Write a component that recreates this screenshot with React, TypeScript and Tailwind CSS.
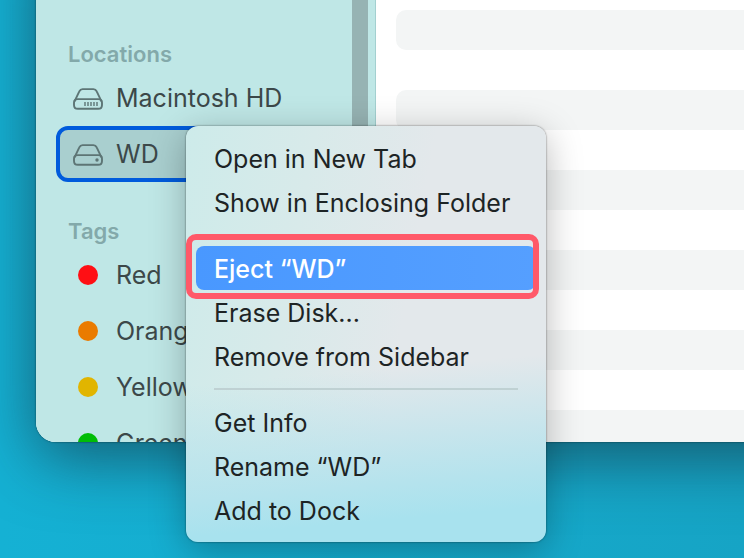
import { ReactNode } from "react";

const tags = [
  { name: "Red", color: "bg-[#ff0f14]" },
  { name: "Orange", color: "bg-[#ea7b00]" },
  { name: "Yellow", color: "bg-[#e1b500]" },
  { name: "Green", color: "bg-[#00bd06]" },
];

function DriveIcon({ internal }: { internal?: boolean }) {
  return (
    <svg width="30" height="24" viewBox="0 -2 30 24" fill="none" stroke="currentColor" strokeWidth="1.9" className="shrink-0 text-[#5d7575]">
      <path d="M1.4 13.6 6.3 3.4C7 1.8 8 1.1 9.6 1.1h10.8c1.6 0 2.6.7 3.3 2.3l4.9 10.2" />
      <path d="M4.6 11.1h20.8c2.3 0 3.6 1.5 3.6 3.6v2.2c0 2.5-1.4 3.9-3.9 3.9H4.9C2.4 20.8 1 19.4 1 16.9v-2.2c0-2.1 1.3-3.6 3.6-3.6Z" />
      {internal ? (
        <path d="M12 14v4M15 14v4M18 14v4M21 14v4M24 14v4" strokeWidth="1.4" />
      ) : (
        <circle cx="24" cy="16" r="1.7" fill="currentColor" stroke="none" />
      )}
    </svg>
  );
}

function SidebarHeading({ children }: { children: ReactNode }) {
  return <h2 className="h-[33px] pl-3 text-[22px] leading-[34px] font-semibold text-[#83a9aa]">{children}</h2>;
}

function SidebarLink({ icon, selected, children }: { icon: ReactNode; selected?: boolean; children: ReactNode }) {
  return (
    <a
      href="#"
      className={
        selected
          ? "flex h-14 items-center gap-3 rounded-xl border-4 border-[#005bdc] bg-[#a9cfcf] pl-3"
          : "flex h-14 items-center gap-3 rounded-xl border-4 border-transparent pl-3"
      }
    >
      <span className="flex w-8 shrink-0 justify-center">{icon}</span>
      <span className="pt-0.5">{children}</span>
    </a>
  );
}

function MenuItem({ children }: { children: ReactNode }) {
  return (
    <button role="menuitem" className="block h-11 w-full rounded-lg px-[18px] pt-0.5 text-left leading-[42px]">
      {children}
    </button>
  );
}

function MenuSeparator() {
  return (
    <div role="separator" className="flex h-[22px] items-center px-[18px]">
      <div className="h-0.5 w-full bg-[#bfd1d3]" />
    </div>
  );
}

export default function App() {
  return (
    <div className="relative flex h-screen flex-col overflow-hidden bg-linear-to-r from-[#15b1d4] to-[#16a4c5] pb-[116px] pl-9 font-[Inter,sans-serif] text-[25px]">
      {/* Finder window, running off the top and right edges of the screen */}
      <div className="-mt-20 -mr-20 min-h-0 flex-1 rounded-bl-[20px] shadow-[0_0_2px_rgba(0,0,0,0.6),0_16px_64px_rgba(20,50,65,0.65)]">
        <div className="flex h-full overflow-hidden rounded-bl-[20px] bg-white pt-20">
          <aside className="-mt-20 flex w-[340px] shrink-0 border-r border-[#a3d0d0] bg-[#bfe7e6] pr-[7px] pl-5">
            <nav className="flex-1 pt-[117px] pr-5 text-[#3c4849]">
              <SidebarHeading>Locations</SidebarHeading>
              <SidebarLink icon={<DriveIcon internal />}>Macintosh HD</SidebarLink>
              <SidebarLink icon={<DriveIcon />} selected>
                WD
              </SidebarLink>
              <div className="pt-8">
                <SidebarHeading>Tags</SidebarHeading>
                {tags.map((tag) => (
                  <SidebarLink key={tag.name} icon={<span className={`size-5 rounded-full ${tag.color}`} />}>
                    {tag.name}
                  </SidebarLink>
                ))}
              </div>
            </nav>
            <div className="w-4 bg-[#96b3b3]" />
          </aside>
          <main className="flex flex-1 flex-col gap-10 pt-2.5 pl-5">
            {[0, 1, 2, 3, 4, 5].map((row) => (
              <div key={row} className="h-10 shrink-0 rounded-l-[10px] bg-[#f3f5f5]" />
            ))}
          </main>
        </div>
      </div>

      {/* Context menu */}
      <div
        role="menu"
        className="absolute top-[126px] left-[186px] w-[360px] rounded-xl bg-[linear-gradient(175deg,transparent_58%,#b5e3ed_84%,#a8e2ee_92%),linear-gradient(100deg,#cdebea,#d8eaea_30%,#e3e8eb_58%)] p-2.5 text-[#1d2425] shadow-[0_0_2px_rgba(0,0,0,0.6),0_8px_36px_rgba(0,0,0,0.28)]"
      >
        <MenuItem>Open in New Tab</MenuItem>
        <MenuItem>Show in Enclosing Folder</MenuItem>
        <MenuSeparator />
        <div className="relative">
          <button
            role="menuitem"
            className="block h-11 w-full rounded-lg bg-linear-to-r from-[#4998ff] to-[#559fff] px-[18px] pt-0.5 text-left leading-[42px] font-medium text-white"
          >
            Eject “WD”
          </button>
          {/* Callout frame */}
          <div className="pointer-events-none absolute -top-3 -right-[3px] -bottom-[9px] -left-2.5 rounded-[10px] border-6 border-[#ff5969]" />
        </div>
        <MenuItem>Erase Disk...</MenuItem>
        <MenuItem>Remove from Sidebar</MenuItem>
        <MenuSeparator />
        <MenuItem>Get Info</MenuItem>
        <MenuItem>Rename “WD”</MenuItem>
        <MenuItem>Add to Dock</MenuItem>
      </div>
    </div>
  );
}
